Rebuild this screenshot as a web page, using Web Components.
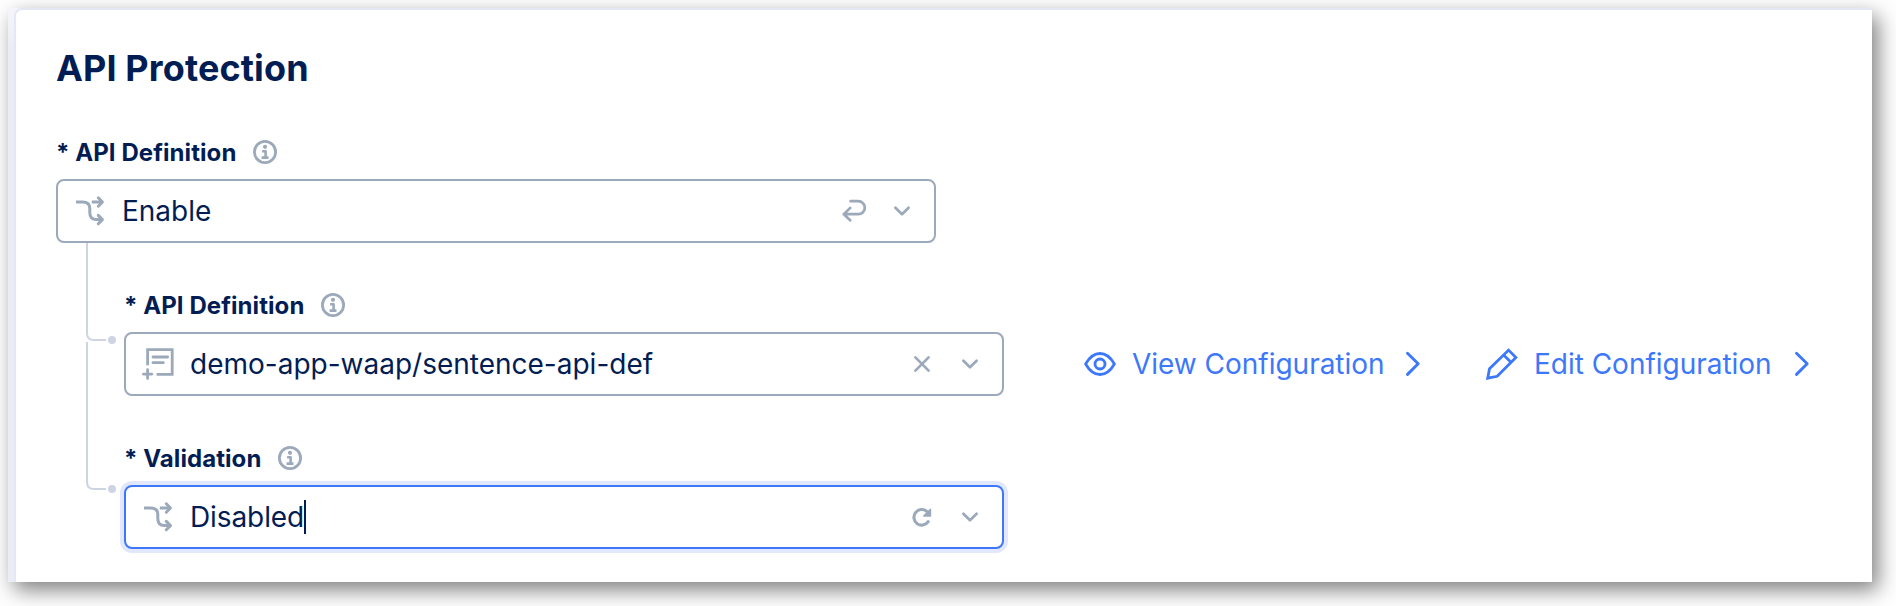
<!DOCTYPE html>
<html lang="en">
<head>
<meta charset="utf-8">
<title>API Protection</title>
<style>
html,body{margin:0;height:100%;overflow:hidden;background:#fff}
body{font-family:Inter,"Liberation Sans",sans-serif;color:#021d54}
</style>
</head>
<body>
<api-panel heading="API Protection">
  <form-field label="API Definition">
    <select-box icon="branch" action="undo">Enable</select-box>
  </form-field>
  <field-tree>
    <form-field label="API Definition">
      <select-box icon="object" action="clear">demo-app-waap/sentence-api-def</select-box>
      <config-link slot="aside" icon="eye" style="margin-left:80px;width:337px">View Configuration</config-link>
      <config-link slot="aside" icon="pencil" style="margin-left:65px;width:324px">Edit Configuration</config-link>
    </form-field>
    <form-field label="Validation">
      <select-box icon="branch" action="reset" focused style="--ls:-.1px">Disabled</select-box>
    </form-field>
  </field-tree>
</api-panel>

<script>
const svg = (w, h, body, sw = 2.7) =>
  `<svg width="${w}" height="${h}" viewBox="0 0 ${w} ${h}" fill="none" stroke="currentColor" stroke-width="${sw}" stroke-linecap="round" stroke-linejoin="round">${body}</svg>`;

const icons = {
  branch: svg(32, 32, '<g transform="translate(2 0)"><path stroke-linecap="butt" d="M0 7H6.5C11 7 13.8 9 13.8 13.5V17.5C13.8 22 16 24.6 20.5 24.6H26"/><path stroke-linecap="butt" d="M15.8 7H26"/><path d="M22.3 2.8L26.4 7L22.3 11.2M22.3 20.4L26.4 24.6L22.3 28.8"/></g>', 3),
  object: svg(32, 32, '<g stroke-linecap="square"><path stroke-linejoin="miter" d="M5.6 15.8V1.6H30.2V26.4H16"/></g><path d="M11 9H25.6M11 14.7H21.3M5.6 21.7V30.4M1.4 26.1H9.8"/>', 2.8),
  undo: svg(24, 24, '<path d="M8.6 2.2H16.3A6.3 6.3 0 0 1 16.3 15.2H1.8M8.2 8.9L1.8 15.2L8.2 21.3"/>', 2.7),
  clear: svg(24, 24, '<path d="M5.4 5.4L18.6 18.6M18.6 5.4L5.4 18.6"/>', 2.7),
  reset: svg(24, 24, '<path d="M18.2 16.7A7.8 7.8 0 1 1 16.6 6.2" stroke-width="3.1"/><path d="M20.5 4.2V11H13.7Z" fill="currentColor" stroke-width="1.4"/>', 2.6),
  down: svg(24, 24, '<path d="M5.4 8.8L12 15.3L18.6 8.8"/>', 2.7),
  right: svg(16, 26, '<path d="M2.5 2.2L13.2 12.7L2.5 23.4"/>', 2.9),
  eye: svg(32, 32, '<path d="M1.6 16C5.5 9.2 10.2 5.5 16 5.5S26.5 9.2 30.4 16C26.5 22.8 21.8 26.5 16 26.5S5.5 22.8 1.6 16Z"/><circle cx="16" cy="16" r="5"/>', 2.8),
  pencil: svg(32, 32, '<path stroke-linejoin="miter" d="M1.7 30.2L3.5 20.8L22.6 2.1L29.9 9.4L11.2 28.3ZM17.6 6.9L25 14.2"/>', 2.8),
  info: svg(24, 24, '<circle cx="12" cy="12" r="10.6"/><circle cx="12" cy="6.8" r="2.1" fill="currentColor" stroke="none"/><path stroke-linecap="butt" d="M9.1 11.3H12.6V17.2M8.6 17.6H15.5" stroke-width="2.6"/>', 2.8)
};

class Base extends HTMLElement {
  connectedCallback() {
    if (!this.shadowRoot) this.attachShadow({ mode: 'open' }).innerHTML = this.view();
  }
}

customElements.define('api-panel', class extends Base {
  view() {
    return `<style>
:host{display:flex;box-sizing:border-box;height:100%;padding:8px 24px 24px 8px}
.frame{flex:1;display:flex;padding-left:6px;background:linear-gradient(#f5f5fb,#ecedf4 40px);box-shadow:6px 8px 20px rgba(0,0,0,.5)}
.card{flex:1;box-sizing:border-box;border:solid #e5e7f5;border-width:2px 0 0 2px;border-radius:8px 0 0 0;background:#fff;padding:36px 0 0 40px;display:flex;flex-direction:column}
h1{margin:0 0 46px;font-size:36px;line-height:44px;font-weight:700;letter-spacing:.13px}
</style><div class="frame"><section class="card"><h1>${this.getAttribute('heading')}</h1><slot></slot></section></div>`;
  }
});

customElements.define('form-field', class extends Base {
  view() {
    return `<style>
:host{display:flex;flex-direction:column;gap:11px}
.label{display:flex;align-items:center;height:32px;gap:16.5px;font-size:24px;line-height:32px;font-weight:700;white-space:pre;letter-spacing:.07px}
.text{padding-top:2px;line-height:30px}
.info{display:flex;color:#9ba9ba}
.row{display:flex;align-items:center;height:64px}
</style><div class="label"><span class="text">* ${this.getAttribute('label')}</span><span class="info">${icons.info}</span></div>
<div class="row"><slot></slot><slot name="aside"></slot></div>`;
  }
});

customElements.define('select-box', class extends Base {
  view() {
    return `<style>
:host{display:flex;align-items:center;box-sizing:border-box;width:880px;height:64px;border:2px solid #9ba9ba;border-radius:8px;padding:0 20px 0 16px;background:#fff;color:#9ba9ba}
:host([focused]){border-color:#3d78fb;box-shadow:0 0 0 4px #e1e8fe}
svg{display:block;flex:none}
.value{margin-left:16px;font-size:28px;line-height:34px;color:#021d54;white-space:pre;letter-spacing:var(--ls,0)}
.caret{width:2px;height:34px;background:#021d54}
.tools{margin-left:auto;display:flex;gap:24px}
</style>${icons[this.getAttribute('icon')]}<span class="value"><slot></slot></span>${this.hasAttribute('focused') ? '<i class="caret"></i>' : ''}
<span class="tools">${icons[this.getAttribute('action')]}${icons.down}</span>`;
  }
});

customElements.define('config-link', class extends Base {
  view() {
    return `<style>
:host{display:flex;align-items:center;color:#3d78fb;font-size:28px;line-height:34px;white-space:pre}
svg{display:block;flex:none}
.text{margin-left:16px;letter-spacing:-.02px}
.go{margin-left:auto}
</style>${icons[this.getAttribute('icon')]}<span class="text"><slot></slot></span><span class="go">${icons.right}</span>`;
  }
});

customElements.define('field-tree', class extends Base {
  view() {
    const rail = h => `<svg width="32" height="${h}" viewBox="0 0 32 ${h}" fill="none"><path d="M1 0V${h - 8}Q1 ${h - 1} 8 ${h - 1}H20" stroke="#ced4e3" stroke-width="2"/><circle cx="26" cy="${h - 1}" r="4" fill="#ced4e3"/></svg>`;
    return `<style>
:host{display:flex}
.rails{display:flex;flex-direction:column;width:38px;margin-left:30px}
svg{display:block;overflow:visible}
.rails svg+svg{margin-top:1px}
.fields{display:flex;flex-direction:column;gap:46px;padding-top:46px}
</style><div class="rails">${rail(98)}${rail(148)}</div><div class="fields"><slot></slot></div>`;
  }
});
</script>
</body>
</html>
